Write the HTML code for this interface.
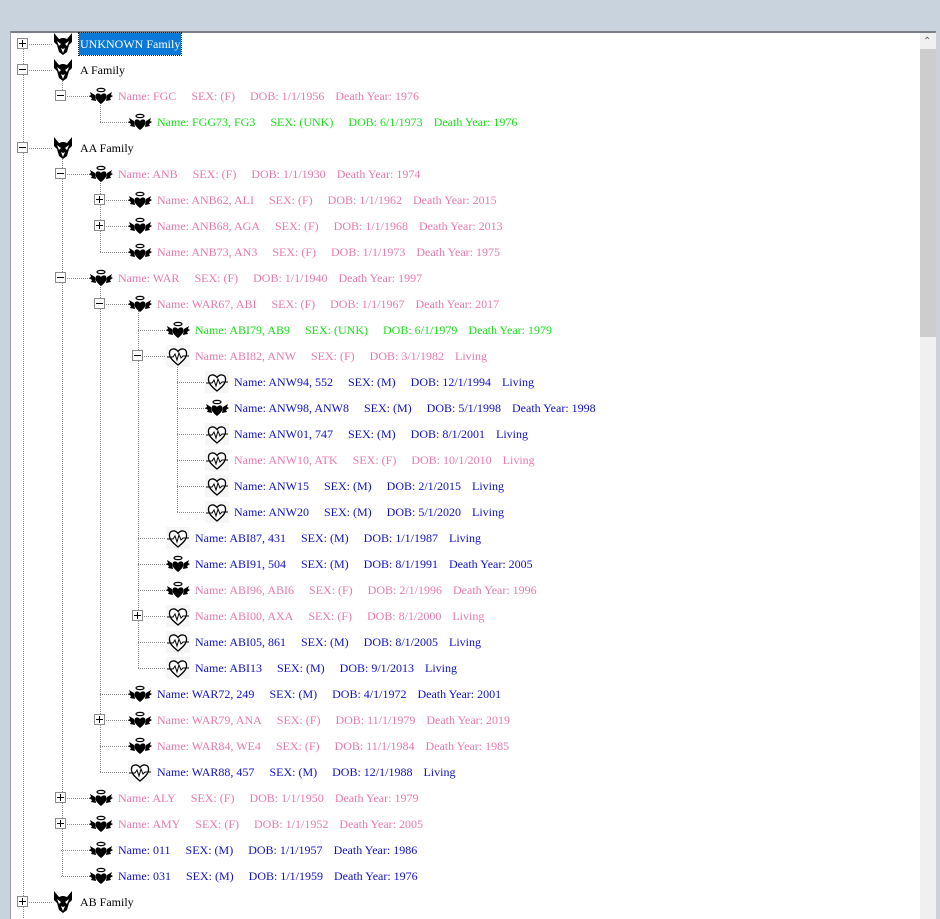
<!DOCTYPE html>
<html><head><meta charset="utf-8">
<style>
html,body{margin:0;padding:0;width:940px;height:919px;overflow:hidden;}
body{background:#c8d3de;position:relative;font-family:"Liberation Serif",serif;font-size:12px;}
#box{position:absolute;left:10px;top:31px;width:926px;height:888px;background:#fff;border-top:2px solid #7a7f86;border-left:1px solid #a0a0a0;border-right:1px solid #a0a0a0;box-sizing:border-box;overflow:hidden;}
#sb{position:absolute;left:920px;top:33px;width:16px;height:886px;background:#f0f0f0;}
#thumb{position:absolute;left:920px;top:49px;width:16px;height:288px;background:#cdcdcd;}
#up{position:absolute;left:923px;top:37px;font-size:10px;color:#606060;font-family:"DejaVu Sans",sans-serif;line-height:10px;}
.v{position:absolute;width:0;border-left:1px dotted #8a8a8a;}
.r{position:absolute;height:26px;width:880px;}
.t{position:absolute;left:17px;top:7px;width:11px;height:11px;border:1px solid #8a8a8a;box-sizing:border-box;background:#fff;}
.t::before{content:"";position:absolute;left:1px;top:4px;width:7px;height:1px;background:#000;}
.p::after{content:"";position:absolute;left:4px;top:1px;width:1px;height:7px;background:#000;}
.h{position:absolute;left:23px;top:13px;width:29px;height:0;border-top:1px dotted #8a8a8a;}
.i{position:absolute;left:51px;top:2px;width:24px;height:22px;}
.x{position:absolute;left:80px;top:0;line-height:26px;white-space:pre;}
.x b{font-weight:normal;}
.s1{margin-left:15px}.s2{margin-left:15px}.s3{margin-left:11px}
.pk{color:#e879ad}.gr{color:#18e018}.bl{color:#1010c8}.bk{color:#000}
.sel{background:#0a78d6;color:#fff;outline:1px dotted #222;padding:0 1px;left:79px;top:2px;line-height:22px;}
</style></head><body>
<svg width="0" height="0" style="position:absolute">
<defs>
<symbol id="ang" viewBox="0 0 24 22">
<ellipse cx="12" cy="5" rx="4" ry="1.6" fill="none" stroke="#000" stroke-width="1.2"/>
<path d="M12 19 C8 16 6 13 6.5 10.5 C7 8 10 7.5 12 10 C14 7.5 17 8 17.5 10.5 C18 13 16 16 12 19Z" fill="#000"/>
<path d="M6 10 L1 7 L2 10 L0 11 L3 13 L2 15 L7 16Z" fill="#000"/>
<path d="M18 10 L23 7 L22 10 L24 11 L21 13 L22 15 L17 16Z" fill="#000"/>
</symbol>
<symbol id="wolf" viewBox="0 0 20 22">
<path d="M1 0 L6 6 L9 5 L11 5 L14 6 L19 0 L19 9 L16 12 L14 19 L10 22 L6 19 L4 12 L1 9Z" fill="#000"/>
<path d="M4 8 L8 11 L6 13Z M16 8 L12 11 L14 13Z" fill="#fff"/>
<path d="M8 15 L10 20 L12 15 L10 16Z" fill="#fff"/>
</symbol>
<symbol id="hrt" viewBox="0 0 24 22">
<rect x="0" y="0" width="24" height="22" fill="#f6f6f6"/>
<path d="M12 20 C6 15 3 12 3.5 7.5 C4 3.5 9 2.5 12 6.5 C15 2.5 20 3.5 20.5 7.5 C21 12 18 15 12 20Z" fill="#fff" stroke="#000" stroke-width="1.3"/>
<path d="M1 12 L7 12 L9 9 L11 15 L13 8 L15 13 L17 11 L23 11" fill="none" stroke="#000" stroke-width="1"/>
</symbol>
</defs></svg>
<div id="box"></div>
<div id="sb"></div><div id="thumb"></div><div id="up">&#8963;</div>

<div class="v" style="left:23px;top:44px;height:880px"></div>
<div class="v" style="left:62px;top:70px;height:26px"></div>
<div class="v" style="left:62px;top:148px;height:728px"></div>
<div class="v" style="left:100px;top:96px;height:26px"></div>
<div class="v" style="left:100px;top:174px;height:78px"></div>
<div class="v" style="left:100px;top:278px;height:494px"></div>
<div class="v" style="left:138px;top:304px;height:364px"></div>
<div class="v" style="left:177px;top:356px;height:156px"></div>

<div class="r" style="left:0;top:31px"><div class="h"></div><div class="t p"></div><svg class="i"><use href="#wolf" x="2" width="20" height="22"/></svg><div class="x sel">UNKNOWN Family</div></div>
<div class="r" style="left:0;top:57px"><div class="h"></div><div class="t"></div><svg class="i"><use href="#wolf" x="2" width="20" height="22"/></svg><div class="x bk">A Family</div></div>
<div class="r" style="left:38px;top:83px"><div class="h"></div><div class="t"></div><svg class="i"><use href="#ang"/></svg><div class="x pk">Name: FGC<b class="s1">SEX: (F)</b><b class="s2">DOB: 1/1/1956</b><b class="s3">Death Year: 1976</b></div></div>
<div class="r" style="left:77px;top:109px"><div class="h"></div><svg class="i"><use href="#ang"/></svg><div class="x gr">Name: FGG73, FG3<b class="s1">SEX: (UNK)</b><b class="s2">DOB: 6/1/1973</b><b class="s3">Death Year: 1976</b></div></div>
<div class="r" style="left:0;top:135px"><div class="h"></div><div class="t"></div><svg class="i"><use href="#wolf" x="2" width="20" height="22"/></svg><div class="x bk">AA Family</div></div>
<div class="r" style="left:38px;top:161px"><div class="h"></div><div class="t"></div><svg class="i"><use href="#ang"/></svg><div class="x pk">Name: ANB<b class="s1">SEX: (F)</b><b class="s2">DOB: 1/1/1930</b><b class="s3">Death Year: 1974</b></div></div>
<div class="r" style="left:77px;top:187px"><div class="h"></div><div class="t p"></div><svg class="i"><use href="#ang"/></svg><div class="x pk">Name: ANB62, ALI<b class="s1">SEX: (F)</b><b class="s2">DOB: 1/1/1962</b><b class="s3">Death Year: 2015</b></div></div>
<div class="r" style="left:77px;top:213px"><div class="h"></div><div class="t p"></div><svg class="i"><use href="#ang"/></svg><div class="x pk">Name: ANB68, AGA<b class="s1">SEX: (F)</b><b class="s2">DOB: 1/1/1968</b><b class="s3">Death Year: 2013</b></div></div>
<div class="r" style="left:77px;top:239px"><div class="h"></div><svg class="i"><use href="#ang"/></svg><div class="x pk">Name: ANB73, AN3<b class="s1">SEX: (F)</b><b class="s2">DOB: 1/1/1973</b><b class="s3">Death Year: 1975</b></div></div>
<div class="r" style="left:38px;top:265px"><div class="h"></div><div class="t"></div><svg class="i"><use href="#ang"/></svg><div class="x pk">Name: WAR<b class="s1">SEX: (F)</b><b class="s2">DOB: 1/1/1940</b><b class="s3">Death Year: 1997</b></div></div>
<div class="r" style="left:77px;top:291px"><div class="h"></div><div class="t"></div><svg class="i"><use href="#ang"/></svg><div class="x pk">Name: WAR67, ABI<b class="s1">SEX: (F)</b><b class="s2">DOB: 1/1/1967</b><b class="s3">Death Year: 2017</b></div></div>
<div class="r" style="left:115px;top:317px"><div class="h"></div><svg class="i"><use href="#ang"/></svg><div class="x gr">Name: ABI79, AB9<b class="s1">SEX: (UNK)</b><b class="s2">DOB: 6/1/1979</b><b class="s3">Death Year: 1979</b></div></div>
<div class="r" style="left:115px;top:343px"><div class="h"></div><div class="t"></div><svg class="i"><use href="#hrt"/></svg><div class="x pk">Name: ABI82, ANW<b class="s1">SEX: (F)</b><b class="s2">DOB: 3/1/1982</b><b class="s3">Living</b></div></div>
<div class="r" style="left:154px;top:369px"><div class="h"></div><svg class="i"><use href="#hrt"/></svg><div class="x bl">Name: ANW94, 552<b class="s1">SEX: (M)</b><b class="s2">DOB: 12/1/1994</b><b class="s3">Living</b></div></div>
<div class="r" style="left:154px;top:395px"><div class="h"></div><svg class="i"><use href="#ang"/></svg><div class="x bl">Name: ANW98, ANW8<b class="s1">SEX: (M)</b><b class="s2">DOB: 5/1/1998</b><b class="s3">Death Year: 1998</b></div></div>
<div class="r" style="left:154px;top:421px"><div class="h"></div><svg class="i"><use href="#hrt"/></svg><div class="x bl">Name: ANW01, 747<b class="s1">SEX: (M)</b><b class="s2">DOB: 8/1/2001</b><b class="s3">Living</b></div></div>
<div class="r" style="left:154px;top:447px"><div class="h"></div><svg class="i"><use href="#hrt"/></svg><div class="x pk">Name: ANW10, ATK<b class="s1">SEX: (F)</b><b class="s2">DOB: 10/1/2010</b><b class="s3">Living</b></div></div>
<div class="r" style="left:154px;top:473px"><div class="h"></div><svg class="i"><use href="#hrt"/></svg><div class="x bl">Name: ANW15<b class="s1">SEX: (M)</b><b class="s2">DOB: 2/1/2015</b><b class="s3">Living</b></div></div>
<div class="r" style="left:154px;top:499px"><div class="h"></div><svg class="i"><use href="#hrt"/></svg><div class="x bl">Name: ANW20<b class="s1">SEX: (M)</b><b class="s2">DOB: 5/1/2020</b><b class="s3">Living</b></div></div>
<div class="r" style="left:115px;top:525px"><div class="h"></div><svg class="i"><use href="#hrt"/></svg><div class="x bl">Name: ABI87, 431<b class="s1">SEX: (M)</b><b class="s2">DOB: 1/1/1987</b><b class="s3">Living</b></div></div>
<div class="r" style="left:115px;top:551px"><div class="h"></div><svg class="i"><use href="#ang"/></svg><div class="x bl">Name: ABI91, 504<b class="s1">SEX: (M)</b><b class="s2">DOB: 8/1/1991</b><b class="s3">Death Year: 2005</b></div></div>
<div class="r" style="left:115px;top:577px"><div class="h"></div><svg class="i"><use href="#ang"/></svg><div class="x pk">Name: ABI96, ABI6<b class="s1">SEX: (F)</b><b class="s2">DOB: 2/1/1996</b><b class="s3">Death Year: 1996</b></div></div>
<div class="r" style="left:115px;top:603px"><div class="h"></div><div class="t p"></div><svg class="i"><use href="#hrt"/></svg><div class="x pk">Name: ABI00, AXA<b class="s1">SEX: (F)</b><b class="s2">DOB: 8/1/2000</b><b class="s3">Living</b></div></div>
<div class="r" style="left:115px;top:629px"><div class="h"></div><svg class="i"><use href="#hrt"/></svg><div class="x bl">Name: ABI05, 861<b class="s1">SEX: (M)</b><b class="s2">DOB: 8/1/2005</b><b class="s3">Living</b></div></div>
<div class="r" style="left:115px;top:655px"><div class="h"></div><svg class="i"><use href="#hrt"/></svg><div class="x bl">Name: ABI13<b class="s1">SEX: (M)</b><b class="s2">DOB: 9/1/2013</b><b class="s3">Living</b></div></div>
<div class="r" style="left:77px;top:681px"><div class="h"></div><svg class="i"><use href="#ang"/></svg><div class="x bl">Name: WAR72, 249<b class="s1">SEX: (M)</b><b class="s2">DOB: 4/1/1972</b><b class="s3">Death Year: 2001</b></div></div>
<div class="r" style="left:77px;top:707px"><div class="h"></div><div class="t p"></div><svg class="i"><use href="#ang"/></svg><div class="x pk">Name: WAR79, ANA<b class="s1">SEX: (F)</b><b class="s2">DOB: 11/1/1979</b><b class="s3">Death Year: 2019</b></div></div>
<div class="r" style="left:77px;top:733px"><div class="h"></div><svg class="i"><use href="#ang"/></svg><div class="x pk">Name: WAR84, WE4<b class="s1">SEX: (F)</b><b class="s2">DOB: 11/1/1984</b><b class="s3">Death Year: 1985</b></div></div>
<div class="r" style="left:77px;top:759px"><div class="h"></div><svg class="i"><use href="#hrt"/></svg><div class="x bl">Name: WAR88, 457<b class="s1">SEX: (M)</b><b class="s2">DOB: 12/1/1988</b><b class="s3">Living</b></div></div>
<div class="r" style="left:38px;top:785px"><div class="h"></div><div class="t p"></div><svg class="i"><use href="#ang"/></svg><div class="x pk">Name: ALY<b class="s1">SEX: (F)</b><b class="s2">DOB: 1/1/1950</b><b class="s3">Death Year: 1979</b></div></div>
<div class="r" style="left:38px;top:811px"><div class="h"></div><div class="t p"></div><svg class="i"><use href="#ang"/></svg><div class="x pk">Name: AMY<b class="s1">SEX: (F)</b><b class="s2">DOB: 1/1/1952</b><b class="s3">Death Year: 2005</b></div></div>
<div class="r" style="left:38px;top:837px"><div class="h"></div><svg class="i"><use href="#ang"/></svg><div class="x bl">Name: 011<b class="s1">SEX: (M)</b><b class="s2">DOB: 1/1/1957</b><b class="s3">Death Year: 1986</b></div></div>
<div class="r" style="left:38px;top:863px"><div class="h"></div><svg class="i"><use href="#ang"/></svg><div class="x bl">Name: 031<b class="s1">SEX: (M)</b><b class="s2">DOB: 1/1/1959</b><b class="s3">Death Year: 1976</b></div></div>
<div class="r" style="left:0;top:889px"><div class="h"></div><div class="t p"></div><svg class="i"><use href="#wolf" x="2" width="20" height="22"/></svg><div class="x bk">AB Family</div></div>
</body></html>
